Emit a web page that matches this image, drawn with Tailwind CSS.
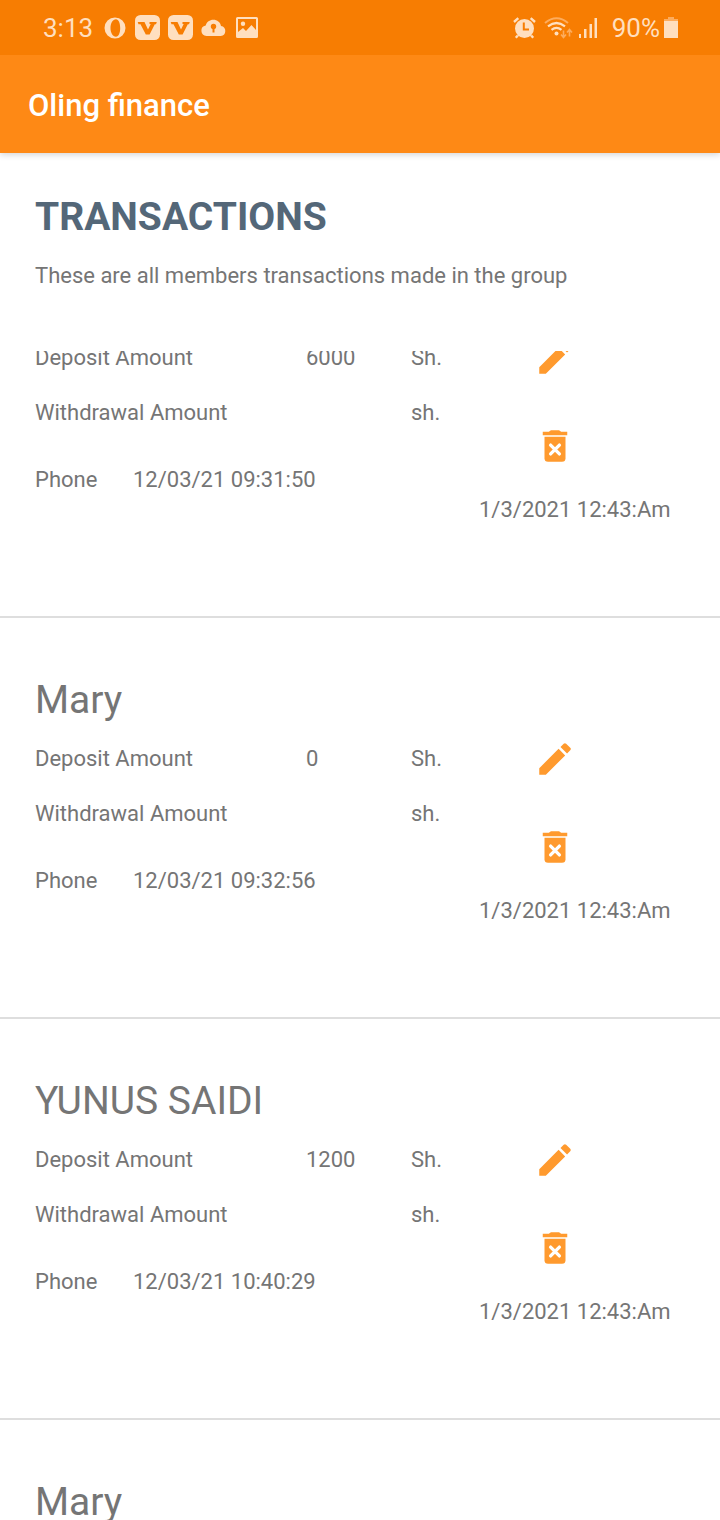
<!DOCTYPE html>
<html lang="en">
<head>
<meta charset="utf-8">
<meta name="viewport" content="width=device-width, initial-scale=1">
<title>Oling finance</title>
<script src="https://cdn.jsdelivr.net/npm/@tailwindcss/browser@4"></script>
</head>
<body class="flex h-screen flex-col overflow-hidden bg-white font-['Roboto',sans-serif] text-[22px] leading-[26px] text-[#757575]">
<svg class="hidden" aria-hidden="true">
  <symbol id="pencil" viewBox="0 0 24 24"><path d="M3 17.25V21h3.75L17.81 9.94l-3.75-3.75L3 17.25zM20.71 7.04a1 1 0 0 0 0-1.41l-2.34-2.34a1 1 0 0 0-1.41 0l-1.83 1.83 3.75 3.75 1.83-1.83z"/></symbol>
  <symbol id="bin" viewBox="0 0 24 24"><path d="M5 3.9h3.500c.5-.6 1-.9 1.700-.9h3.600c.7 0 1.200.3 1.700.9H19v2H5z"/><path d="M6 6.700h12V19a2 2 0 0 1-2 2H8a2 2 0 0 1-2-2z"/><path d="M9.500 11.500l5 5M14.500 11.500l-5 5" stroke="#fff" stroke-width="1.900" stroke-linecap="round"/></symbol>
  <symbol id="vbadge" viewBox="0 0 25 25"><rect width="25" height="25" rx="5.500" fill="#ffdfbf"/><path d="M2.700 7h6.800l3.500 7.500L15.700 9H14.500V7h7.300l-.8 2.200h-1.200L14.600 19.500h-3.800L5.500 9.200H3.500z" fill="#f77d02"/></symbol>
</svg>

<div class="relative z-10 flex h-[55px] shrink-0 items-center justify-between bg-[#f77d02] pl-[43px] pr-[42px] text-[26px] leading-[30px] text-[#ffdfbf]">
  <div class="flex items-center">
    <span>3:13</span>
    <svg class="ml-[11px] size-[22px]" viewBox="0 0 22 22"><path fill="#ffdfbf" fill-rule="evenodd" d="M11 .5a10.500 10.500 0 1 0 0 21 10.500 10.500 0 0 0 0-21zM12 2.300c2.600 0 4.200 3.900 4.200 8.700s-1.600 8.700-4.200 8.700c-3.200 0-5.500-3.900-5.500-8.700s2.300-8.700 5.500-8.700z"/></svg>
    <svg class="ml-[9px] size-[25px]"><use href="#vbadge"/></svg>
    <svg class="ml-2 size-[25px]"><use href="#vbadge"/></svg>
    <svg class="ml-2 h-[18px] w-[25px]" viewBox="0 0 25 18"><path fill="#ffdfbf" d="M5.500 17a5.300 5.300 0 0 1-.8-10.500C5.700 3 8.700.8 12.300.8c3.900 0 6.900 2.400 7.700 6.100A5.100 5.100 0 0 1 19.800 17z"/><circle cx="12.500" cy="7.500" r="2.700" fill="#f77d02"/><path fill="#f77d02" d="M11.500 8h2v5.500h-2z"/></svg>
    <svg class="ml-[10px] h-[21px] w-[22px]" viewBox="0 0 22 21"><path fill="#ffdfbf" fill-rule="evenodd" d="M1.500 0h19A1.500 1.500 0 0 1 22 1.500v18a1.500 1.500 0 0 1-1.500 1.500h-19A1.500 1.500 0 0 1 0 19.500v-18A1.500 1.500 0 0 1 1.500 0zM2 2v13l5-4 3 3 5.500-6 4.500 5V2z"/><circle cx="7" cy="6.800" r="2.200" fill="#ffdfbf"/></svg>
  </div>
  <div class="flex items-center">
    <svg class="h-[22px] w-[23px]" viewBox="0 0 23 22"><circle cx="11.500" cy="11.500" r="9.500" fill="#ffdfbf"/><path d="M1 5L5.300 1.200M22 5l-4.300-3.800M4.800 18.500l-2 2.300M18.200 18.500l2 2.300" stroke="#ffdfbf" stroke-width="2.400" fill="none"/><path d="M10.800 5.500v7h5.200" stroke="#f77d02" stroke-width="2" fill="none"/></svg>
    <svg class="ml-2 h-[22px] w-[29px]" viewBox="0 0 29 22" fill="none" stroke="#ffdfbf"><path d="M1 6Q12.500-3.500 24 6" stroke="#fdac5d" stroke-width="2"/><path d="M4 9.300q8.500-6.600 17 0M7.500 12.800q5-3.800 10 0" stroke-width="2.200"/><circle cx="12.500" cy="16.500" r="2" fill="#ffdfbf" stroke="none"/><path d="M19.500 13.500v7M17 17.500l2.500 3 2.500-3M25.500 19.500v-7M23 15.500l2.500-3 2.500 3" stroke="#fdac5d" stroke-width="1.600"/></svg>
    <svg class="ml-[6px] h-[20px] w-[18px]" viewBox="0 0 18 20" fill="#ffdfbf"><path d="M0 16h2v4H0zM5 11h2.500v9H5zM10.500 6H13v14h-2.500zM15.500 0H18v20h-2.500z"/></svg>
    <span class="ml-[15px]">90%</span>
    <svg class="ml-1 h-[21px] w-[14px]" viewBox="0 0 14 21"><path fill="#fdac5d" d="M4 0h6v2h4v3H0V2h4z"/><path fill="#ffdfbf" d="M0 4h14v17H0z"/></svg>
  </div>
</div>

<header class="relative flex h-[98px] shrink-0 items-center bg-[#fe8915] px-7 pt-1 shadow-[0_2px_6px_rgba(0,0,0,0.16)]">
  <span class="text-[31px] leading-9 font-medium text-white">Oling finance</span>
</header>

<section class="h-[198px] shrink-0 px-[35px] pt-10">
  <h1 class="text-[39px] leading-[48px] font-bold text-[#546778]">TRANSACTIONS</h1>
  <p class="mt-[22px]">These are all members transactions made in the group</p>
</section>

<main class="min-h-0 flex-1 overflow-hidden"><ul id="list" class="-mt-[134px]"></ul></main>

<script>
const rows = [
  { name: '', deposit: '6000', time: '12/03/21 09:31:50' },
  { name: 'Mary', deposit: '0', time: '12/03/21 09:32:56' },
  { name: 'YUNUS SAIDI', deposit: '1200', time: '12/03/21 10:40:29' }
];
const card = r => `
  <li class="grid h-[401px] grid-cols-[2fr_1fr] border-b-2 border-[#dedede]">
    <div class="pt-[58px] pl-[35px]">
      <h2 class="h-12 text-[39px] leading-[48px]">${r.name}</h2>
      <div class="mt-[22px] grid grid-cols-[271px_105px_1fr]"><span>Deposit Amount</span><span>${r.deposit}</span><span>Sh.</span></div>
      <div class="mt-[29px] grid grid-cols-[271px_105px_1fr]"><span>Withdrawal Amount</span><span></span><span>sh.</span></div>
      <div class="mt-[41px] grid grid-cols-[98px_1fr]"><span>Phone</span><span>${r.time}</span></div>
    </div>
    <div class="-ml-px flex flex-col items-start pt-[120px]">
      <button type="button" aria-label="Edit" class="ml-[55px] text-[#ff9a2e]"><svg class="size-[42px]" fill="currentColor"><use href="#pencil"/></svg></button>
      <button type="button" aria-label="Delete" class="mt-[46px] ml-[55px] text-[#ff9a2e]"><svg class="size-[42px]" fill="currentColor"><use href="#bin"/></svg></button>
      <span class="mt-[30px]">1/3/2021 12:43:Am</span>
    </div>
  </li>`;
document.getElementById('list').innerHTML = rows.map(card).join('') + `
  <li class="pt-[58px] pl-[35px]"><h2 class="text-[39px] leading-[48px]">Mary</h2></li>`;
</script>
</body>
</html>
